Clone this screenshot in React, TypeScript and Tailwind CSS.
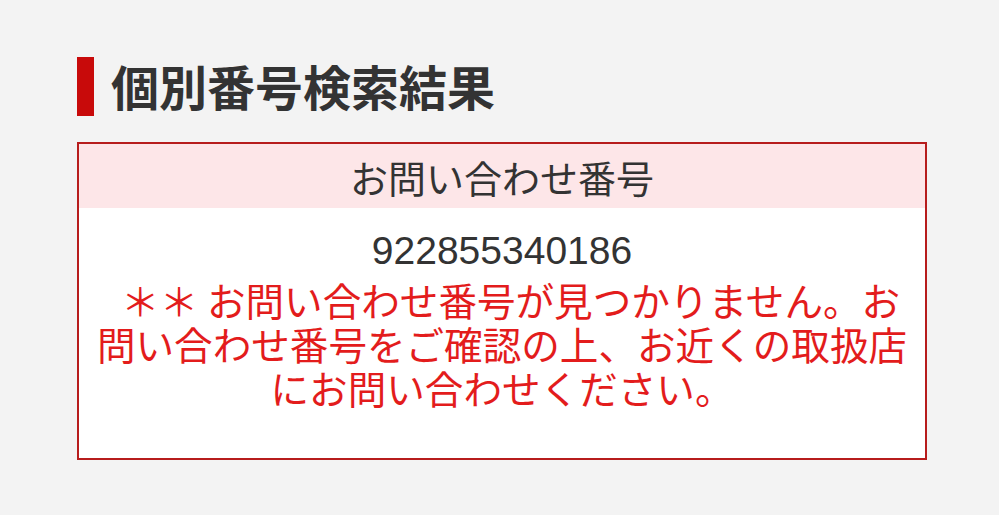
export default function App() {
  const font = { fontFamily: '"Noto Sans CJK JP", "Noto Sans", sans-serif' };
  return (
    <div className="w-[999px] h-[515px] bg-[#f3f3f3] overflow-hidden" style={font}>
      <div className="pl-[77px] pt-[57px]">
        <div className="flex items-center h-[59px]">
          <div className="w-[17px] h-[59px] bg-[#c80a0a]" />
          <h1 className="ml-[17px] -mt-[4px] text-[48px] leading-none font-bold text-[#333333]">個別番号検索結果</h1>
        </div>

        <div className="mt-[26px] w-[850px] border-2 border-[#b71c1c] bg-white">
          <div className="h-[64px] bg-[#fde6e8] flex items-center justify-center text-[38px] text-[#333333]">
            お問い合わせ番号
          </div>
          <div className="px-[14px] pt-[21px] pb-[49px] text-center">
            <p className="text-[39px] leading-[44px] text-[#333333]" style={{ fontFamily: '"Liberation Sans", "Noto Sans CJK JP", sans-serif' }}>
              922855340186
            </p>
            <p className="mt-[4px] text-[38.6px] leading-[44px] text-[#e31c1c]">
              {'\u00a0\u00a0＊＊ お問い合わせ番号が見つかりません。お問い合わせ番号をご確認の上、お近くの取扱店にお問い合わせください。'}
            </p>
          </div>
        </div>
      </div>
    </div>
  );
}
